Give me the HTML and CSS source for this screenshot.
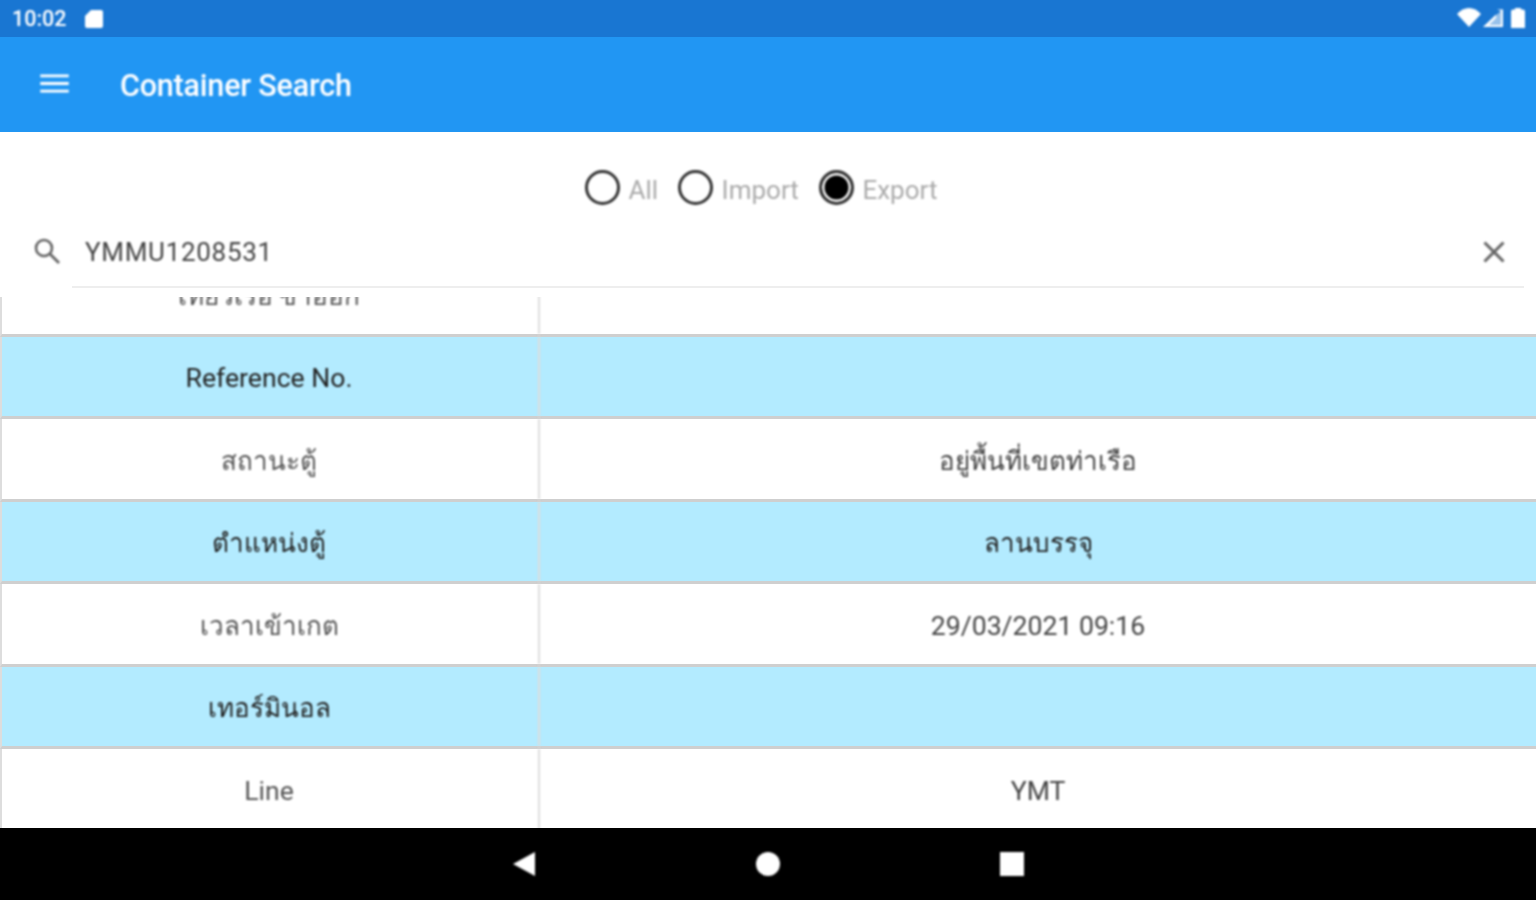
FILE: index.html
```html
<!DOCTYPE html>
<html lang="th">
<head>
<meta charset="utf-8">
<title>Container Search</title>
<link rel="stylesheet" href="styles.css">
</head>
<body>
<div class="screen">
  <header class="status-bar">
    <span class="clock">10:02</span>
    <svg class="sd" viewBox="0 0 18 18"><path d="M6 0h10a2 2 0 0 1 2 2v14a2 2 0 0 1-2 2H2a2 2 0 0 1-2-2V6z" fill="#fff"/></svg>
    <span class="status-right">
      <svg class="wifi" viewBox="0 0 24 19"><path d="M0 6C7-2 17-2 24 6L12 19z" fill="#fff"/></svg>
      <svg class="signal" viewBox="0 0 20 18"><path d="M20 0v18H0z" fill="#fff" opacity=".55"/><path d="M0 18 13 5.500V9l-7 7h7v2zM14 .500h6V18h-7v-2h5V2z" fill="#fff"/></svg>
      <svg class="battery" viewBox="0 0 14 20"><path d="M4 0h6v1.500h2a2 2 0 0 1 2 2V20H0V3.500a2 2 0 0 1 2-2h2z" fill="#fff"/></svg>
    </span>
  </header>
  <div class="app-bar">
    <svg class="menu" viewBox="0 0 30 20"><path d="M0 2h30M0 10h30M0 18h30" stroke="#fff" stroke-width="3" fill="none"/></svg>
    <span class="title">Container Search</span>
  </div>
  <div class="filters">
    <span class="radio"></span><span class="radio-label">All</span>
    <span class="radio"></span><span class="radio-label">Import</span>
    <span class="radio checked"></span><span class="radio-label">Export</span>
  </div>
  <div class="search">
    <svg class="search-icon" viewBox="0 0 28 28"><circle cx="11" cy="11" r="8" fill="none" stroke="#666" stroke-width="2.600"/><path d="M17 17l9 9" stroke="#666" stroke-width="2.800"/></svg>
    <div class="search-field">
      <span class="search-value">YMMU1208531</span>
      <svg class="clear-icon" viewBox="0 0 22 22"><path d="M1.500 1.500l19 19M20.500 1.500l-19 19" stroke="#666" stroke-width="3"/></svg>
    </div>
  </div>
  <main class="results">
    <div class="table">
      <div class="row"><div class="cell key">เที่ยวเรือ ขาออก</div><div class="cell value"></div></div>
      <div class="row alt"><div class="cell key dark latin">Reference No.</div><div class="cell value"></div></div>
      <div class="row"><div class="cell key">สถานะตู้</div><div class="cell value">อยู่พื้นที่เขตท่าเรือ</div></div>
      <div class="row alt"><div class="cell key dark">ตำแหน่งตู้</div><div class="cell value dark">ลานบรรจุ</div></div>
      <div class="row"><div class="cell key">เวลาเข้าเกต</div><div class="cell value latin">29/03/2021 09:16</div></div>
      <div class="row alt"><div class="cell key dark">เทอร์มินอล</div><div class="cell value"></div></div>
      <div class="row"><div class="cell key latin">Line</div><div class="cell value latin">YMT</div></div>
    </div>
  </main>
  <footer class="nav-bar">
    <svg class="nav-back" viewBox="0 0 24 26"><path d="M1 13 23 1v24z" fill="#fff"/></svg>
    <span class="nav-home"></span>
    <span class="nav-recent"></span>
  </footer>
</div>
</body>
</html>
```
FILE: styles.css
```css
* { box-sizing: border-box; }
html, body { margin: 0; height: 100%; background: #fff; overflow: hidden; }
.screen {
  width: 1536px; height: 900px; display: flex; flex-direction: column;
  font-family: Roboto, "DejaVu Sans", "Noto Sans", sans-serif;
}
.clock, .sd, .status-right, .menu, .title, .radio, .radio-label,
.search-icon, .search-value, .clear-icon, .cell,
.nav-back, .nav-home, .nav-recent { filter: blur(0.8px); }
.status-bar {
  height: 37px; flex: none; background: #1976d2; color: #fff;
  display: flex; align-items: center; padding: 0 11px 0 12px;
}
.clock { font-size: 21.500px; font-weight: 500; }
.sd { width: 18px; height: 18px; margin-left: 18px; }
.status-right { margin-left: auto; display: flex; align-items: center; }
.wifi { width: 24px; height: 19px; margin-top: -2px; }
.signal { width: 20px; height: 18px; margin-left: 2px; margin-top: -1px; }
.battery { width: 14px; height: 20px; margin-left: 8px; margin-top: -2px; }
.app-bar {
  height: 95px; flex: none; background: #2196f3; color: #fff;
  display: flex; align-items: center; padding: 0 0 2px 40px;
}
.menu { width: 29px; height: 19px; }
.title { font-size: 30.500px; font-weight: 500; margin: 4px 0 0 51px; letter-spacing: -0.2px; }
.filters {
  height: 93px; flex: none; display: flex; align-items: center;
  padding: 22px 0 0 585px;
}
.radio {
  width: 35px; height: 35px; border-radius: 50%; border: 3px solid #333;
  margin-top: -4px; flex: none; background: #fff;
}
.radio.checked { background: #000; box-shadow: inset 0 0 0 2.500px #fff; }
.radio-label { font-size: 26px; color: #aaa; margin: 0 20px 0 8.500px; }
.search { height: 72px; flex: none; display: flex; align-items: stretch; padding-right: 12px; }
.search-icon { width: 28px; height: 28px; margin: 12px 11px 0 33px; flex: none; }
.search-field {
  flex: 1; display: flex; align-items: center; justify-content: space-between;
  border-bottom: 2px solid #eee; padding: 0 19px 8px 13px; height: 63px;
}
.search-value { font-size: 26px; color: #444; letter-spacing: .7px; }
.clear-icon { width: 22px; height: 22px; }
.results { flex: 1; overflow: hidden; min-height: 0; }
.table { margin-top: -43px; }
.row {
  height: 82.500px; display: grid; grid-template-columns: 536px 1fr;
  border-bottom: 3px solid #cfcfcf; border-left: 2px solid #ddd;
}
.row.alt { background: #b3ebff; }
.cell {
  display: flex; align-items: center; justify-content: center;
  font-size: 26px; color: #555; padding-top: 3px;
}
.cell.key { padding-right: 2px; }
.cell.latin { font-size: 26.600px; padding-top: 3px; }
.cell.dark { color: #222; }
.cell.value { border-left: 2px solid #ddd; color: #444; }
.row.alt .cell.value { color: #222; }
.nav-bar {
  height: 72px; flex: none; background: #000;
  display: grid; grid-template-columns: 512px 24px 220px 24px 220px 24px;
  align-items: center;
}
.nav-back { grid-column: 2; width: 24px; height: 26px; }
.nav-home { grid-column: 4; width: 24px; height: 24px; border-radius: 50%; background: #fff; }
.nav-recent { grid-column: 6; width: 24px; height: 24px; background: #fff; }
```
